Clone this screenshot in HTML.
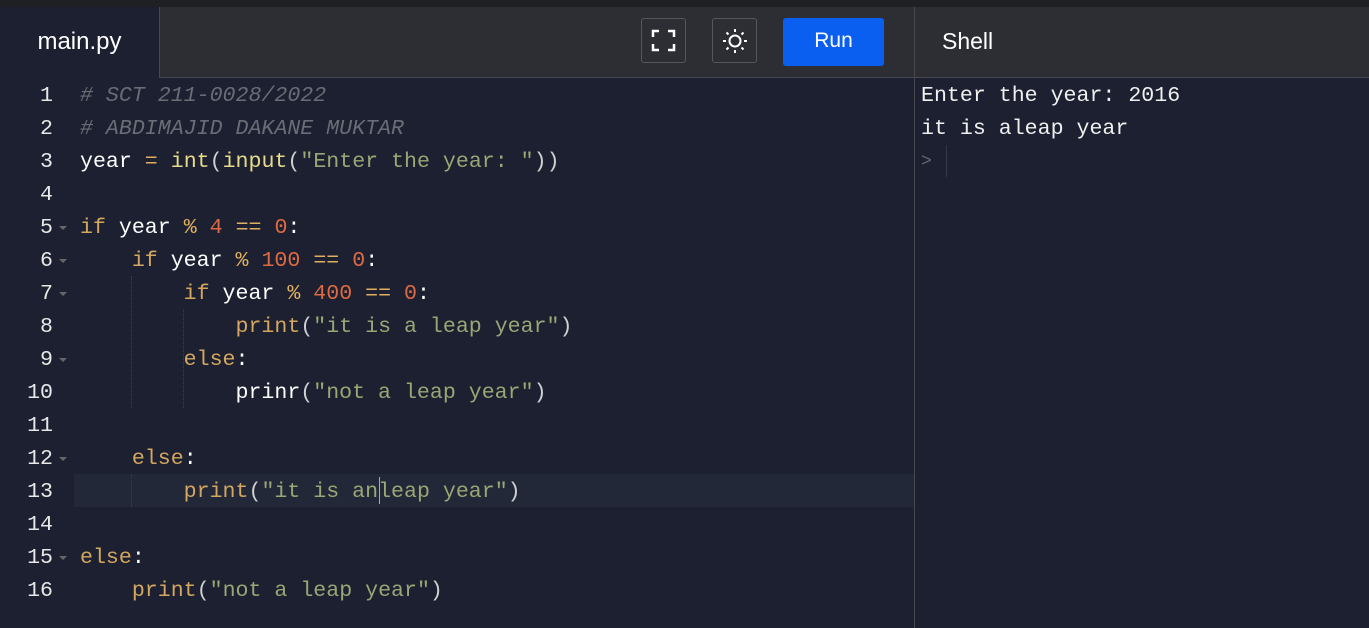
<!DOCTYPE html><html><head><style>
body{margin:0;width:1369px;height:628px;background:#1c2030;overflow:hidden;position:relative;font-family:"Liberation Sans",sans-serif}
.top{position:absolute;left:0;top:0;width:1369px;height:7px;background:#1f2024;border-bottom:1px solid #44464d}
.hdr{position:absolute;left:0;top:7px;width:1369px;height:70px;background:#2d2e33;border-bottom:1px solid #46484e}
.tab{position:absolute;left:0;top:7px;width:159px;height:71px;background:#1c2030;border-right:1px solid #46484e;color:#fff;font-size:24px;line-height:70px;text-align:center}
.btn{position:absolute;top:18px;width:45px;height:45px;border:1px solid #55575d;border-radius:3px;box-sizing:border-box}
.run{position:absolute;left:783px;top:18px;width:101px;height:48px;background:#0a5ef0;border-radius:3px;color:#fff;font-size:21px;text-align:center;line-height:46px}
.div{position:absolute;left:914px;top:7px;width:1px;height:621px;background:#46484e}
.shellt{position:absolute;left:942px;top:7px;color:#fff;font-size:23px;line-height:68px}
.code{position:absolute;left:0;top:80px;font-family:"Liberation Mono",monospace;font-size:21.6px}
.l{height:33px;line-height:33px;white-space:pre;position:relative}
.n{position:absolute;left:0;width:53px;text-align:right;color:#e8e8e8}
.t{position:absolute;left:80px;color:#fff}
.f{position:absolute;left:59px;top:14px;border-left:4px solid transparent;border-right:4px solid transparent;border-top:4px solid #666}
.c{color:#6a6d76;font-style:italic}.k{color:#d4a760}.o{color:#e0b060}.d{color:#dd6a42}.s{color:#9aa675}.y{color:#e8dc8c}.p{color:#d0d0d0}
.hl{position:absolute;left:74px;top:474px;width:840px;height:33px;background:#232838}
.g{position:absolute;width:0;border-left:1px dotted #3a3f50}
.sh{position:absolute;left:921px;top:80px;font-family:"Liberation Mono",monospace;font-size:21.6px;color:#f0f0f0}
</style></head><body>
<div class="top"></div><div class="hdr"></div>
<div class="tab">main.py</div>
<div class="btn" style="left:641px"><svg width="45" height="45" viewBox="0 0 45 45" style="position:absolute;left:-1px;top:-1px"><path d="M12 19v-6h6M27 13h6v6M33 26v6h-6M18 32h-6v-6" fill="none" stroke="#fff" stroke-width="2.5"/></svg></div>
<div class="btn" style="left:712px"><svg width="45" height="45" viewBox="0 0 45 45" style="position:absolute;left:-1px;top:-1px"><circle cx="23" cy="23" r="5.5" fill="none" stroke="#fff" stroke-width="2"/><path d="M23 11v3M23 32v3M11 23h3M32 23h3M14.5 14.5l2 2M29.5 29.5l2 2M14.5 31.5l2-2M29.5 16.5l2-2" stroke="#fff" stroke-width="2"/></svg></div>
<div class="run">Run</div>
<div class="div"></div>
<div class="shellt">Shell</div>
<div class="hl"></div>
<div class="g" style="left:131px;top:276px;height:132px"></div>
<div class="g" style="left:183px;top:309px;height:99px"></div>
<div class="g" style="left:131px;top:474px;height:33px"></div>
<div style="position:absolute;left:379px;top:477px;width:1px;height:27px;background:#aaa"></div>
<div class="code">
<div class="l"><span class="n">1</span><span class="t c"># SCT 211-0028/2022</span></div>
<div class="l"><span class="n">2</span><span class="t c"># ABDIMAJID DAKANE MUKTAR</span></div>
<div class="l"><span class="n">3</span><span class="t">year <span class="o">=</span> <span class="y">int</span><span class="p">(</span><span class="y">input</span><span class="p">(</span><span class="s">"Enter the year: "</span><span class="p">))</span></span></div>
<div class="l"><span class="n">4</span></div>
<div class="l"><span class="n">5</span><span class="f"></span><span class="t"><span class="k">if</span> year <span class="o">%</span> <span class="d">4</span> <span class="o">==</span> <span class="d">0</span>:</span></div>
<div class="l"><span class="n">6</span><span class="f"></span><span class="t">    <span class="k">if</span> year <span class="o">%</span> <span class="d">100</span> <span class="o">==</span> <span class="d">0</span>:</span></div>
<div class="l"><span class="n">7</span><span class="f"></span><span class="t">        <span class="k">if</span> year <span class="o">%</span> <span class="d">400</span> <span class="o">==</span> <span class="d">0</span>:</span></div>
<div class="l"><span class="n">8</span><span class="t">            <span class="k">print</span><span class="p">(</span><span class="s">"it is a leap year"</span><span class="p">)</span></span></div>
<div class="l"><span class="n">9</span><span class="f"></span><span class="t">        <span class="k">else</span>:</span></div>
<div class="l"><span class="n">10</span><span class="t">            prinr<span class="p">(</span><span class="s">"not a leap year"</span><span class="p">)</span></span></div>
<div class="l"><span class="n">11</span></div>
<div class="l"><span class="n">12</span><span class="f"></span><span class="t">    <span class="k">else</span>:</span></div>
<div class="l"><span class="n">13</span><span class="t">        <span class="k">print</span><span class="p">(</span><span class="s">"it is anleap year"</span><span class="p">)</span></span></div>
<div class="l"><span class="n">14</span></div>
<div class="l"><span class="n">15</span><span class="f"></span><span class="t"><span class="k">else</span>:</span></div>
<div class="l"><span class="n">16</span><span class="t">    <span class="k">print</span><span class="p">(</span><span class="s">"not a leap year"</span><span class="p">)</span></span></div>
</div>
<div class="sh">
<div class="l">Enter the year: 2016</div>
<div class="l">it is aleap year</div>
<div class="l" style="color:#666;font-size:18px">&gt;</div>
</div>
<div style="position:absolute;left:946px;top:145px;width:1px;height:32px;background:#333848"></div>
</body></html>
